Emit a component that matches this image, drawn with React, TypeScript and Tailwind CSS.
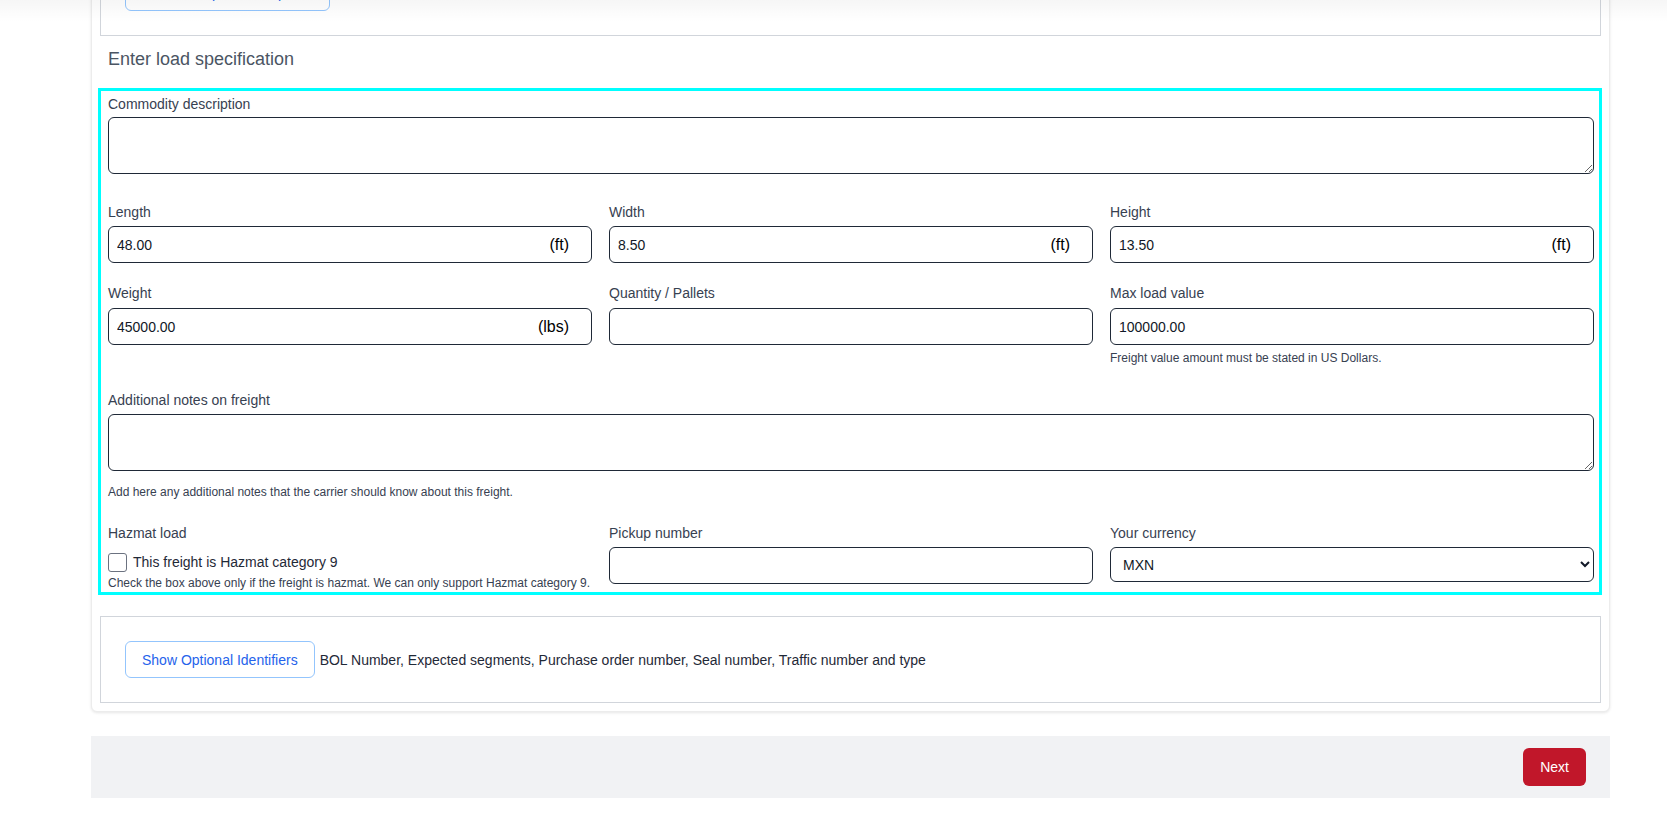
import React from "react";

function UnitInput({ label, value, unit }: { label: string; value: string; unit?: string }) {
  return (
    <div className="flex flex-col">
      <label className="block text-sm leading-5 text-[#374151]">{label}</label>
      <div className="mt-[5px] flex h-[37px] items-center rounded-md border border-[#1f2937] bg-white">
        <input
          defaultValue={value}
          className="h-full min-w-0 flex-1 bg-transparent px-2 text-sm text-[#111827] outline-none"
        />
        {unit ? <span className="mr-[22px] text-base leading-none text-black">{unit}</span> : null}
      </div>
    </div>
  );
}

export default function App() {
  return (
    <div className="relative h-[814px] w-full overflow-hidden bg-white font-['Liberation_Sans',Arial,sans-serif]">
      <div className="ml-[91px] mt-[-60px] w-[1519px] rounded-md border border-[#ececec] bg-white px-2 pb-2 pt-2 shadow-[0_1px_3px_rgba(0,0,0,0.10)]">
        {/* top (cut off) section */}
        <div className="border border-[#d1d5db] px-6 pb-6 pt-6">
          <button className="flex h-[37px] w-[205px] items-center justify-center rounded-md border border-[#93c5fd] bg-white px-4 text-sm text-[#2563eb]">
            Show Optional Stops
          </button>
        </div>

        <h2 className="mt-[9px] pl-2 text-lg leading-7 text-[#4b5563]">Enter load specification</h2>

        {/* highlighted form */}
        <div className="-ml-[2px] -mr-[1px] mt-[15px] border-[3px] border-[#00ffff] pb-px pl-[7px] pr-[5px] pt-[3px]">
          <label className="block text-sm leading-5 text-[#374151]">Commodity description</label>
          <textarea className="mt-[3px] block h-[57px] w-full rounded-md border border-[#1f2937] px-2 py-1 text-sm outline-none" />

          <div className="mt-[28px] grid grid-cols-3 gap-x-[17px]">
            <div className="[&>div>div]:mt-[4px]">
              <UnitInput label="Length" value="48.00" unit="(ft)" />
            </div>
            <div className="[&>div>div]:mt-[4px]">
              <UnitInput label="Width" value="8.50" unit="(ft)" />
            </div>
            <div className="[&>div>div]:mt-[4px]">
              <UnitInput label="Height" value="13.50" unit="(ft)" />
            </div>
          </div>

          <div className="mt-[20px] grid grid-cols-3 gap-x-[17px]">
            <UnitInput label="Weight" value="45000.00" unit="(lbs)" />
            <UnitInput label="Quantity / Pallets" value="" />
            <div>
              <UnitInput label="Max load value" value="100000.00" />
              <p className="mt-[5px] text-xs leading-4 text-[#374151]">
                Freight value amount must be stated in US Dollars.
              </p>
            </div>
          </div>

          <label className="mt-[24px] block text-sm leading-5 text-[#374151]">Additional notes on freight</label>
          <textarea className="mt-[4px] block h-[57px] w-full rounded-md border border-[#1f2937] px-2 py-1 text-sm outline-none" />
          <p className="mt-[13px] text-xs leading-4 text-[#374151]">
            Add here any additional notes that the carrier should know about this freight.
          </p>

          <div className="mt-[23px] grid grid-cols-3 gap-x-[17px]">
            <div>
              <label className="block text-sm leading-5 text-[#374151]">Hazmat load</label>
              <div className="mt-[9px] flex h-5 items-center gap-[6px]">
                <span className="block h-[19px] w-[19px] rounded-[3px] border border-[#6b7280] bg-white" />
                <span className="text-sm leading-5 text-[#1f2937]">This freight is Hazmat category 9</span>
              </div>
              <p className="mt-[4px] whitespace-nowrap text-xs leading-[15px] text-[#374151]">
                Check the box above only if the freight is hazmat. We can only support Hazmat category 9.
              </p>
            </div>
            <div>
              <label className="block text-sm leading-5 text-[#374151]">Pickup number</label>
              <input className="mt-[4px] block h-[37px] w-full rounded-md border border-[#1f2937] px-2 text-sm outline-none" />
            </div>
            <div>
              <label className="block text-sm leading-5 text-[#374151]">Your currency</label>
              <select
                defaultValue="MXN"
                className="mt-[4px] block h-[35px] w-full rounded-md border border-[#1f2937] bg-white px-2 text-sm text-[#111827] outline-none"
              >
                <option value="MXN">MXN</option>
                <option value="USD">USD</option>
              </select>
            </div>
          </div>
        </div>

        {/* optional identifiers */}
        <div className="mt-[21px] flex items-center border border-[#d1d5db] p-6">
          <button className="h-[37px] rounded-md border border-[#93c5fd] bg-white px-4 text-sm text-[#2563eb]">
            Show Optional Identifiers
          </button>
          <span className="ml-[5px] text-sm text-[#1f2937]">
            BOL Number, Expected segments, Purchase order number, Seal number, Traffic number and type
          </span>
        </div>
      </div>

      {/* footer */}
      <div className="ml-[91px] mt-[24px] flex w-[1519px] justify-end bg-[#f1f2f4] py-3 pr-6">
        <button className="h-[38px] rounded-md bg-[#c1172a] px-[17px] text-sm text-white">Next</button>
      </div>

      <div className="pointer-events-none absolute left-0 right-0 top-0 h-[22px] bg-gradient-to-b from-[rgba(0,0,0,0.035)] to-transparent" />
    </div>
  );
}
